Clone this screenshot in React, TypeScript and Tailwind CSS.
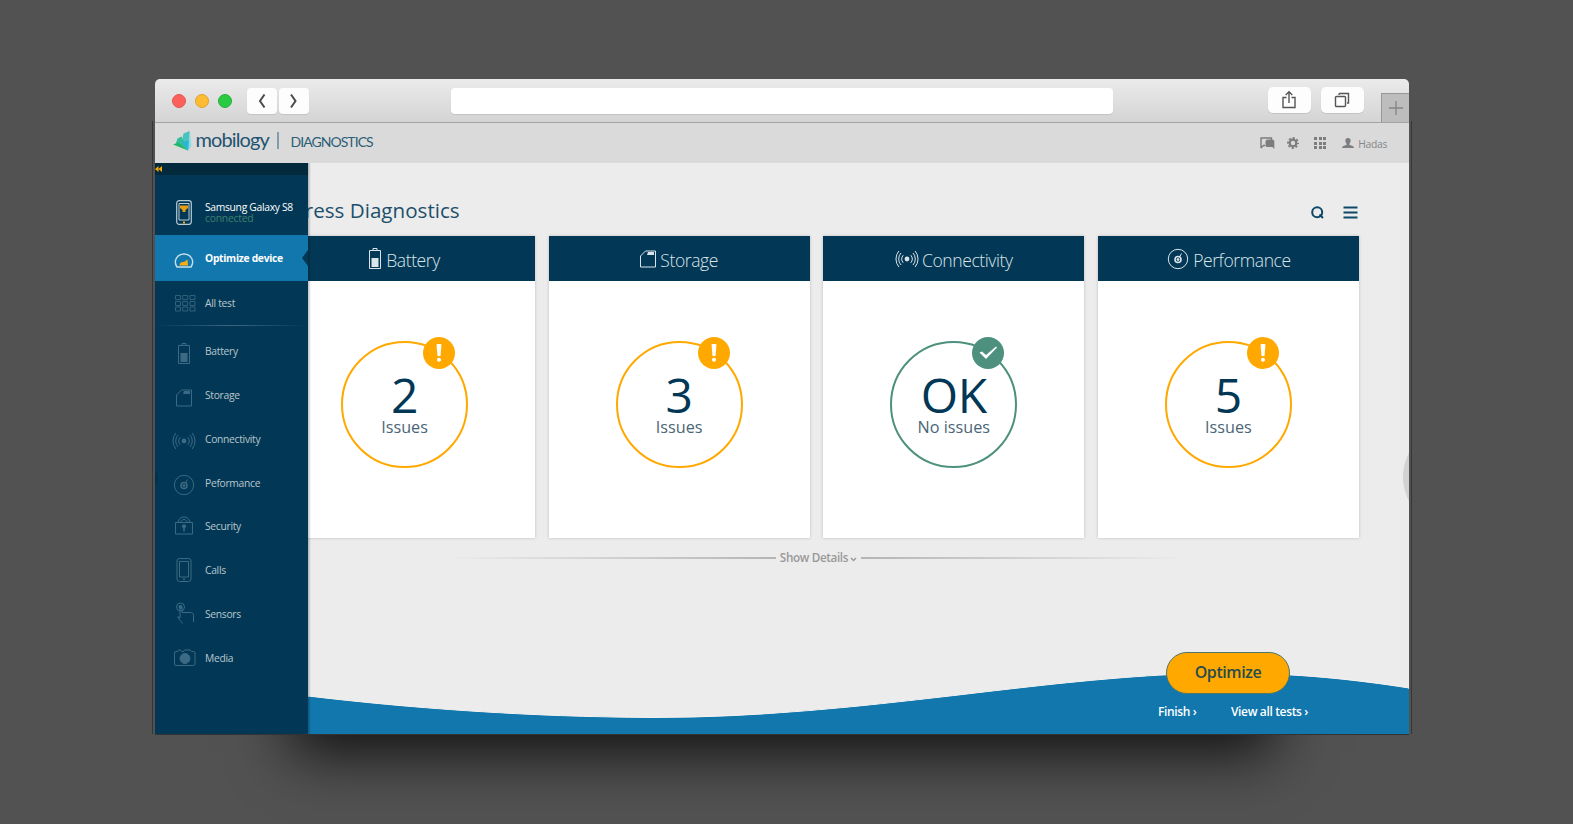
import type { ReactNode } from "react"
import { clsx } from "clsx"

type IconName =
  | "battery"
  | "storage"
  | "connectivity"
  | "performance"
  | "security"
  | "calls"
  | "sensors"
  | "media"
  | "grid"

const icons: Record<IconName, ReactNode> = {
  battery: (
    <>
      <path d="M6.5 3.5h11v18h-11z" />
      <path d="M10 3.5v-2h4v2" />
      <path d="M8.5 11h7v9h-7z" fill="currentColor" stroke="none" />
    </>
  ),
  storage: (
    <>
      <path d="M4.5 9l5-5h10v16h-15z" />
      <path d="M12 5h6v3h-7z" fill="currentColor" stroke="none" />
    </>
  ),
  connectivity: (
    <>
      <circle cx="12" cy="12" r="2.4" fill="currentColor" stroke="none" />
      <path d="M8.200 8.200a6 6 0 0 0 0 7.600M15.800 8.200a6 6 0 0 1 0 7.600" />
      <path d="M6 6a9 9 0 0 0 0 12M18 6a9 9 0 0 1 0 12" />
      <path d="M3.900 4a12.400 12.400 0 0 0 0 16M20.100 4a12.400 12.400 0 0 1 0 16" />
    </>
  ),
  performance: (
    <>
      <circle cx="12" cy="12" r="9.700" />
      <circle cx="12" cy="12.500" r="3" strokeWidth="1.600" />
      <circle cx="12" cy="12.500" r="1" fill="currentColor" />
      <path d="M13.500 10l2-3.500" />
    </>
  ),
  security: (
    <>
      <path d="M3.500 8.500h17v11.500h-17z" />
      <path d="M6 8.500c1-7.500 11-7.500 12 0M8.500 8.500c.8-4 6.200-4 7 0" />
      <circle cx="12" cy="12.300" r="2" fill="currentColor" stroke="none" />
      <path d="M12 12v5.500" strokeWidth="1.500" />
    </>
  ),
  calls: (
    <>
      <rect x="5" y="0.500" width="14" height="23" rx="2.500" />
      <path d="M7.500 3.500h9v15.500h-9z" />
      <circle cx="12" cy="21.300" r="1" fill="currentColor" stroke="none" />
    </>
  ),
  sensors: (
    <>
      <circle cx="8.500" cy="5" r="4" />
      <circle cx="8.500" cy="5" r="2" fill="currentColor" stroke="none" />
      <path d="M8 5v11l-2-1.500c0 2.500 2.500 4 4.500 7M10 5.500v5h8.500c2 0 3 1 3 3v6.500" />
    </>
  ),
  media: (
    <>
      <path d="M4 6.500h1.500l1-1.500h2l1 1.500h2l1-1.500h5.500l1.500 1.500h2q1.500 0 1.500 1.500v11q0 1.500-1.500 1.500h-17.500q-1.500 0-1.500-1.500V8q0-1.500 1.500-1.500z" />
      <circle cx="13" cy="13.500" r="5" fill="currentColor" />
    </>
  ),
  grid: (
    <path d="M2.500 4.500h5v4h-5zM9.700 4.500h5v4h-5zM17 4.500h5v4h-5zM2.500 10.500h5v4h-5zM9.700 10.500h5v4h-5zM17 10.500h5v4h-5zM2.500 16h5v4h-5zM9.700 16h5v4h-5zM17 16h5v4h-5z" />
  ),
}

function Icon({ name, className }: { name: IconName; className?: string }) {
  return (
    <svg
      viewBox="0 0 24 24"
      fill="none"
      stroke="currentColor"
      strokeWidth="1"
      className={clsx("shrink-0 overflow-visible", className)}
    >
      {icons[name]}
    </svg>
  )
}

const menu: { label: string; icon: IconName; raised?: boolean }[] = [
  { label: "Battery", icon: "battery" },
  { label: "Storage", icon: "storage" },
  { label: "Connectivity", icon: "connectivity" },
  { label: "Peformance", icon: "performance" },
  { label: "Security", icon: "security", raised: true },
  { label: "Calls", icon: "calls", raised: true },
  { label: "Sensors", icon: "sensors", raised: true },
  { label: "Media", icon: "media", raised: true },
]

const cards: { title: string; icon: IconName; value: string; note: string; ok?: boolean }[] = [
  { title: "Battery", icon: "battery", value: "2", note: "Issues" },
  { title: "Storage", icon: "storage", value: "3", note: "Issues" },
  { title: "Connectivity", icon: "connectivity", value: "OK", note: "No issues", ok: true },
  { title: "Performance", icon: "performance", value: "5", note: "Issues" },
]

function BrowserBar() {
  return (
    <div className="flex h-[44px] shrink-0 items-center rounded-t-[5px] border-b-[1.500px] border-[#a3a3a3] bg-gradient-to-b from-[#ebebeb] to-[#d4d4d4] pl-[17px]">
      <div className="flex gap-[9px]">
        <span className="size-[14px] rounded-full border border-[#e2544e] bg-[#fc605b]" />
        <span className="size-[14px] rounded-full border border-[#dfa032] bg-[#fdbc33]" />
        <span className="size-[14px] rounded-full border border-[#24b03b] bg-[#2acb42]" />
      </div>
      <div className="ml-[15px] flex gap-[1.500px]">
        {["M10.500 1.500L6 8l4.500 6.500", "M6 1.500L10.500 8l-4.500 6.500"].map((d) => (
          <button key={d} className="flex h-[26px] w-[30px] items-center justify-center rounded-[4px] bg-[#fdfdfd] shadow-[0_1px_1px_#0000001a]">
            <svg viewBox="0 0 17 16" className="h-4 w-[17px]" fill="none" stroke="#4a4a4a" strokeWidth="2">
              <path d={d} />
            </svg>
          </button>
        ))}
      </div>
      <div className="ml-[142px] h-[26px] w-[662px] rounded-[4px] bg-white shadow-[0_1px_1px_#0000001a]" />
      <div className="mb-[2px] ml-[155px] flex gap-[10px]">
        <button className="flex h-[26px] w-[43px] items-center justify-center rounded-[5px] bg-[#fdfdfd] shadow-[0_1px_1px_#0000001a]">
          <svg viewBox="0 0 16 20" className="h-5 w-4" fill="none" stroke="#555" strokeWidth="1.400">
            <path d="M5.500 7.500H2v10h12v-10h-3.500M8 13V2M4.700 5L8 1.700 11.300 5" />
          </svg>
        </button>
        <button className="flex h-[26px] w-[43px] items-center justify-center rounded-[5px] bg-[#fdfdfd] shadow-[0_1px_1px_#0000001a]">
          <svg viewBox="0 0 16 16" className="size-4" fill="none" stroke="#555" strokeWidth="1.400">
            <rect x="1.500" y="4.500" width="10" height="10" rx="1" />
            <path d="M5 1.500h9.500v9.500h-1.500M5 1.500v1.500" />
          </svg>
        </button>
      </div>
      <div className="ml-auto flex h-[29px] w-[28px] items-center justify-center self-end border-t-[1.500px] border-l-[1.500px] border-[#989898] bg-[#bdbdbd]">
        <svg viewBox="0 0 14 14" className="size-[14px]" stroke="#858585" strokeWidth="1.300">
          <path d="M7 0v14M0 7h14" />
        </svg>
      </div>
    </div>
  )
}

function AppHeader() {
  return (
    <header className="flex h-[40px] shrink-0 items-center bg-[#dadada] pr-[22px] pl-[18px] text-[#7d7d7d]">
      <svg viewBox="0 0 19 20" className="mb-[4px] h-5 w-[19px]">
        <path d="M10.500 2.500L16.500 0l1.500 15-3 4.500L9 10z" fill="#49c3bd" />
        <path d="M16.500 0l2 13.500L15 19.500z" fill="#8edce4" />
        <path d="M4.500 7.500L8.500 5.500 15 19.500 3 12z" fill="#35bd9c" />
        <path d="M0 13.500L5 11.500l10 8z" fill="#20b866" />
        <path d="M9 11l7-1.500-1 10z" fill="#2bb5d8" />
      </svg>
      <span className="mb-[8px] ml-[3.500px] w-[74px] font-['Lato',sans-serif] text-[20px] leading-5 tracking-[-0.900px] text-[#1f5470]">mobilogy</span>
      <span className="mb-[5px] ml-[7.500px] h-[17px] w-[1.500px] bg-[#7f9dab]" />
      <span className="mb-[4px] ml-[12px] font-['Lato',sans-serif] text-[14px] tracking-[-0.950px] text-[#2d5e77]">DIAGNOSTICS</span>

      <div className="ml-auto flex items-center">
        <svg viewBox="0 0 15 12" className="h-3 w-[15px]">
          <path d="M1 11V1h10.500v3M1 11l2.500-2.500H5" fill="none" stroke="currentColor" strokeWidth="1.400" />
          <path d="M5.500 4l1.500-1.500h5l2.300 1V12l-2-2H6.500l-1-1z" fill="currentColor" />
        </svg>
        <svg viewBox="0 0 12 12" className="ml-[12px] size-3">
          <circle cx="6" cy="6" r="3.300" fill="none" stroke="currentColor" strokeWidth="2.200" />
          <circle cx="6" cy="6" r="5" fill="none" stroke="currentColor" strokeWidth="1.800" strokeDasharray="2.130 1.797" strokeDashoffset="1" />
        </svg>
        <div className="ml-[15px] grid grid-cols-3 gap-[1.500px]">
          {Array.from({ length: 9 }, (_, i) => (
            <span key={i} className="size-[3px] bg-current" />
          ))}
        </div>
        <svg viewBox="0 0 12 11" className="ml-[16px] h-[11px] w-3" fill="currentColor">
          <path d="M6 0c2 0 3 1.300 2.600 3.300-.2 1.300-.8 2-1.200 2.500v1l3.100 1.100c1 .4 1.300 1 1.300 2.100H.2c0-1.100.3-1.700 1.300-2.100l3.100-1.100v-1C4.200 5.300 3.600 4.600 3.400 3.300 3 1.300 4 0 6 0z" />
        </svg>
        <span className="mt-[3px] ml-[4px] text-[10.300px] tracking-[-0.300px] text-[#868686]">Hadas</span>
      </div>
    </header>
  )
}

function Sidebar() {
  return (
    <aside className="relative z-10 w-[153px] shrink-0 overflow-hidden bg-[#023855] text-[10.300px] font-medium tracking-[-0.300px] text-[#b9c6ce]">
      <div className="flex h-[12px] items-center bg-[#022a3c]">
        <svg viewBox="0 0 7 6" className="h-[6px] w-[7px]" fill="#f5a80c">
          <path d="M3.500 0v6L0 3zM7 0v6L3.500 3z" />
        </svg>
      </div>
      <div className="flex h-[60px] items-center pt-[14px] pl-[21px]">
        <svg viewBox="0 0 16 25" className="h-[25px] w-4" fill="none" stroke="#b9cbd5">
          <rect x="0.700" y="0.700" width="14.600" height="23.600" rx="2.500" strokeWidth="1.200" />
          <path d="M3 3.500h10v16.500H3z" />
          <path d="M4 5.500h8v2.500l-2.500 2v2h-3v-2L4 8z" fill="#e79e14" stroke="none" />
          <path d="M7 21.500h2v2H7z" fill="#f5a80c" stroke="none" />
        </svg>
        <div className="mt-[2px] ml-[13px] leading-[11px]">
          <div className="whitespace-nowrap text-white">Samsung Galaxy S8</div>
          <div className="tracking-[-0.200px] text-[#3f806f]">connected</div>
        </div>
      </div>
      <div className="relative flex h-[46px] items-center bg-[#1177ad] pl-[19px] font-bold text-white">
        <svg viewBox="0 0 20 15" className="mt-[4px] h-[15px] w-5" fill="none">
          <path d="M3 14C-1 8 3 1 10 1s11 7 7 13z" stroke="#c5e0ee" strokeWidth="1.400" />
          <path d="M5.500 12.500c0-3 2.500-4 4.500-3.500l3.500-2.500.5 6z" fill="#f9ad10" />
        </svg>
        <span className="mt-[2px] ml-[11px] whitespace-nowrap">Optimize device</span>
        <svg viewBox="0 0 6 16" className="absolute top-[15px] right-0 h-4 w-[6px]" fill="#023855">
          <path d="M6 0v16L0 8z" />
        </svg>
      </div>
      <div className="flex h-[44px] items-center pl-[18px]">
        <Icon name="grid" className="size-[24px] text-[#30607a]" />
        <span className="mt-[1px] ml-[8px]">All test</span>
      </div>
      <div className="h-px bg-gradient-to-r from-transparent via-[#3c677e] to-transparent" />
      <nav className="pt-[5px]">
        {menu.map((item) => (
          <div key={item.label} className="flex h-[43.800px] items-center pl-[17px]">
            <Icon
              name={item.icon}
              className={clsx("size-[24px] text-[#3b6a84]", item.raised ? "mb-[4px]" : "mt-[2px]")}
            />
            <span className="mb-[2px] ml-[9px]">{item.label}</span>
          </div>
        ))}
      </nav>
      <span className="absolute top-[296px] -left-[67px] h-[38px] w-[70px] rounded-[50%] bg-[#02304a]" />
    </aside>
  )
}

function Card({ title, icon, value, note, ok }: (typeof cards)[number]) {
  return (
    <section className="flex flex-1 flex-col bg-white shadow-[0_0_3px_#00000033]">
      <h2 className="flex h-[45px] items-center justify-center gap-[3px] bg-[#023855] text-[17.500px] font-light tracking-[-0.400px] text-[#dbe4ea]">
        <Icon
          name={icon}
          className={clsx("size-[24px]", icon === "battery" && "-mr-[4px] -ml-[6px]", icon === "storage" && "-mr-[3px] -ml-[4px]")}
        />
        <span className="mt-[3px]">{title}</span>
      </h2>
      <div className="flex flex-1 items-center justify-center pb-[10px]">
        <div
          className={clsx(
            "relative flex size-[127px] flex-col items-center rounded-full border-[2.500px] pt-[28px]",
            ok ? "border-[#4e907e]" : "border-[#ffa900]",
          )}
        >
          <span className="text-[48px] leading-[48px] tracking-[-0.300px] text-[#023855]">{value}</span>
          <span className="mt-[-2px] text-[16.200px] leading-[20px] text-[#4a6676]">{note}</span>
          <span
            className={clsx(
              "absolute -top-[6px] right-[11px] flex size-8 items-center justify-center rounded-full",
              ok ? "bg-[#4e907e]" : "bg-[#ffa900]",
            )}
          >
            <svg viewBox="0 0 18 18" className="size-[18px]" fill="white">
              {ok ? (
                <path d="M.5 8.500L3 7.500l4 3.500L17 2.500 18 3.500 7 15z" />
              ) : (
                <path d="M6.500.5Q9-.8 11.500.5L10.500 12h-3zM9 13.700a2 2 0 1 0 .01 0z" />
              )}
            </svg>
          </span>
        </div>
      </div>
    </section>
  )
}

function Main() {
  return (
    <main className="relative flex flex-1 flex-col overflow-hidden bg-[#ececec]">
      {/* Content slides under the open sidebar */}
      <div className="-ml-[34px] pr-[50px]">
        <div className="flex h-[73px] items-center pt-[22px] text-[#1d4f6b]">
          <h1 className="-ml-[4px] text-[20.600px] whitespace-nowrap">Express Diagnostics</h1>
          <svg viewBox="0 0 13 13" className="mt-[3px] mr-[19px] ml-auto size-[13px]" fill="none" stroke="#0d4868" strokeWidth="2">
            <circle cx="6.200" cy="6.200" r="5" />
            <path d="M8.500 8.500l3.500 3.500" />
          </svg>
          <svg viewBox="0 0 15 13" className="mt-[3px] mr-[1px] h-[13px] w-[15px]" stroke="#0d4868" strokeWidth="2.200">
            <path d="M.5 1.500h14M.5 6.500h14M.5 11.500h14" />
          </svg>
        </div>
        <div className="flex h-[302px] gap-[13.500px]">
          {cards.map((card) => (
            <Card key={card.title} {...card} />
          ))}
        </div>
        <div className="mt-[11px] flex h-[18px] items-center justify-center text-[11.700px] font-semibold tracking-[-0.350px] text-[#999]">
          <span className="h-[1.500px] w-[330px] bg-gradient-to-r from-transparent to-[#b5b5b5]" />
          <span className="ml-[4px]">Show Details</span>
          <svg viewBox="0 0 7 5" className="mt-[2px] mr-[3px] ml-[2px] h-[5px] w-[7px]" fill="none" stroke="currentColor" strokeWidth="1.500">
            <path d="M1 1l2.500 2.500L6 1" />
          </svg>
          <span className="ml-[1px] h-[1.500px] w-[326px] bg-gradient-to-r from-[#b5b5b5] to-transparent" />
        </div>
      </div>

      {/* Next-page handle peeking in from the right edge */}
      <span className="absolute top-[263px] -right-[96px] size-[102px] rounded-full bg-[#d2d2d2]" />
      <svg viewBox="0 0 1101 64" className="absolute bottom-0 left-0 h-16 w-[1101px]">
        <path d="M0 26C100 38 220 47 345 47.500C560 47.500 740 4 917 3C990 3 1050 10 1101 18V64H0z" fill="#1177ad" stroke="#f7f3f0" strokeWidth="1" />
        <path d="M0 27C100 39 220 48 345 48.500C560 48.500 740 5 917 4C990 4 1050 11 1101 19V64H0z" fill="#1177ad" />
      </svg>
      <span className="absolute inset-y-0 left-0 w-[3px] bg-gradient-to-r from-[#00000040] to-transparent" />

      <footer className="relative mt-auto mr-[101px] flex w-[160px] flex-col items-center self-end pb-[14px]">
        <button className="h-[42px] w-[124px] rounded-full border border-[#4f7569] bg-[#ffa900] pb-[2px] text-[16px] font-semibold tracking-[-0.400px] text-[#284c4c]">
          Optimize
        </button>
        <div className="mt-[9px] flex w-full justify-between text-[12px] leading-[17px] font-semibold tracking-[-0.350px] whitespace-nowrap text-white">
          <a className="ml-[10px]">Finish ›</a>
          <a>View all tests ›</a>
        </div>
      </footer>
    </main>
  )
}

export default function App() {
  return (
    <div className="flex h-[824px] w-[1573px] justify-center overflow-hidden bg-[#525252] pt-[79px] pr-[9px] font-['Open_Sans',sans-serif]">
      <div className="relative flex h-[656px] w-[1254px] flex-col rounded-t-[5px] shadow-[0_154px_56px_-136px_#000000cc]">
        <span className="absolute top-[42px] -right-[3px] -left-[3px] h-[613px] border-x border-[#363636]" />
        <BrowserBar />
        <AppHeader />
        <div className="relative flex flex-1 border-b border-[#333]">
          <Sidebar />
          <Main />
        </div>
      </div>
    </div>
  )
}
